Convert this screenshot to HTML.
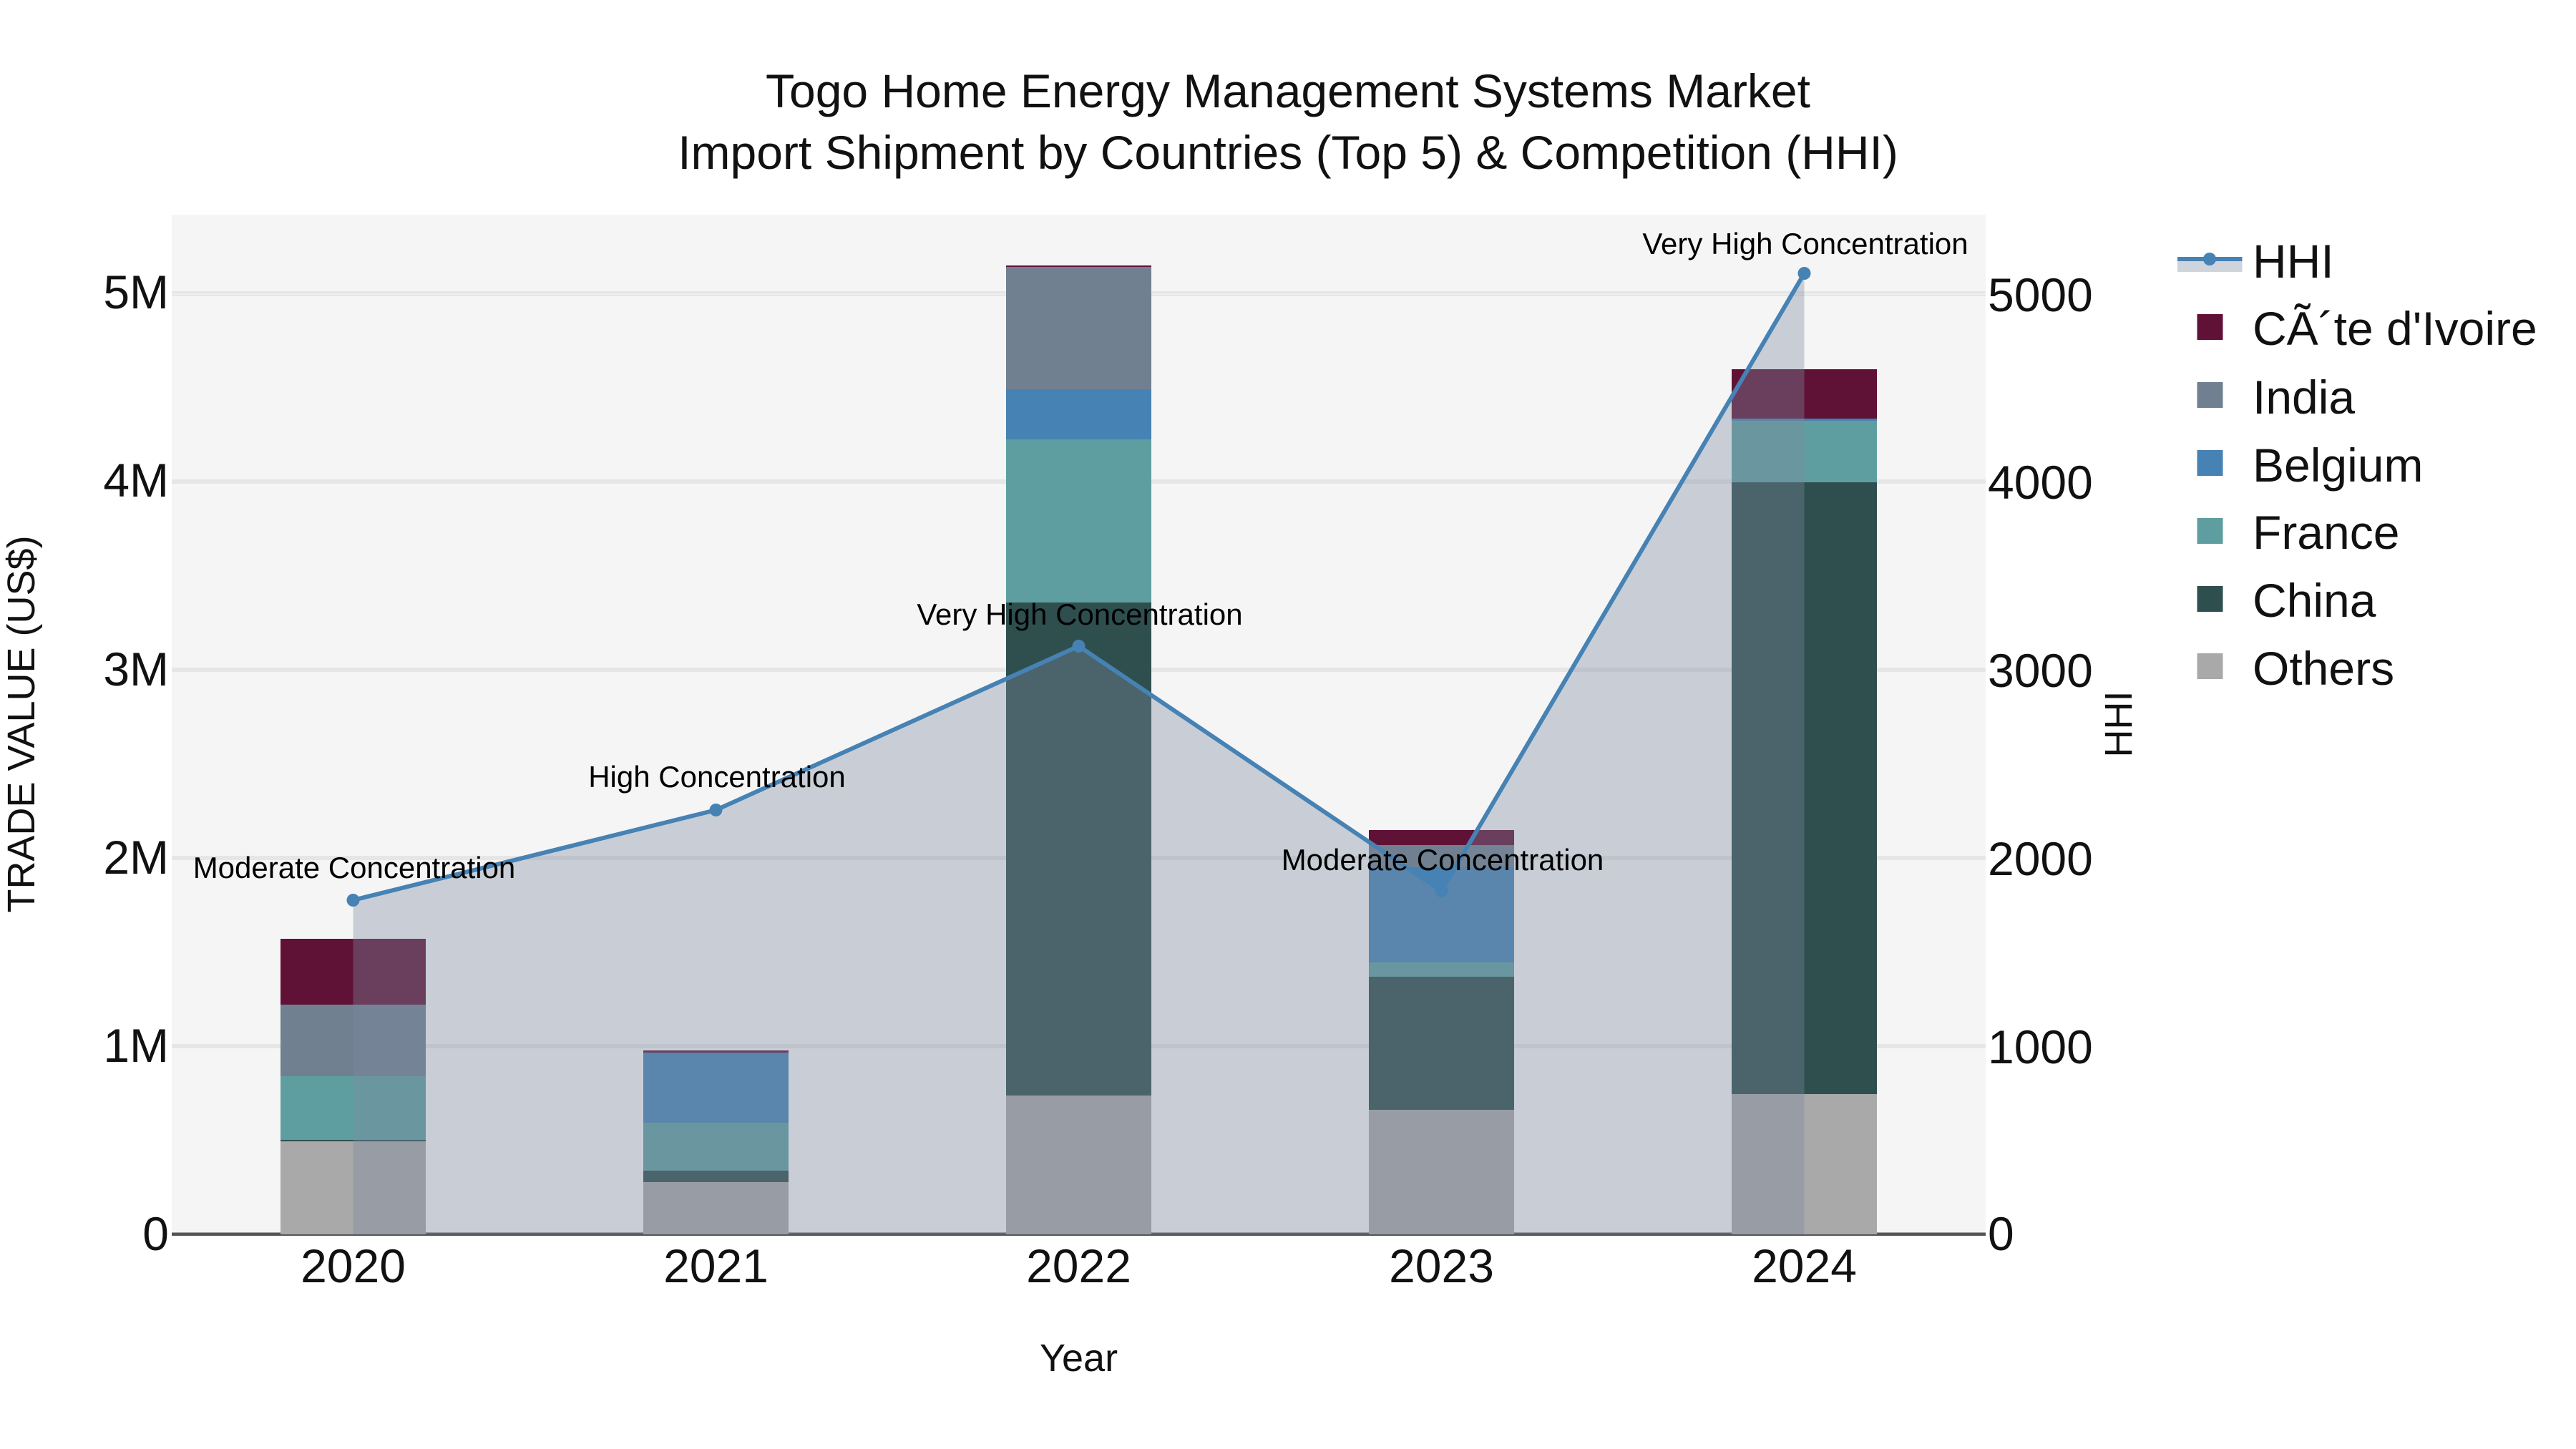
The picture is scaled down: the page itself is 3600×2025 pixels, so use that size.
<!DOCTYPE html>
<html>
<head>
<meta charset="utf-8">
<title>Togo Home Energy Management Systems Market</title>
<style>
html,body{margin:0;padding:0;background:#fff;width:3600px;height:2025px;overflow:hidden}
svg{display:block}
text{font-family:"Liberation Sans",Arial,sans-serif;fill:#111}
.t{font-size:66px}
.a{font-size:54px}
.n{font-size:42px;fill:#000;text-anchor:middle}
.m{text-anchor:middle}
.e{text-anchor:end}
</style>
</head>
<body>
<svg width="3600" height="2025" viewBox="0 0 3600 2025" xmlns="http://www.w3.org/2000/svg">
<rect width="3600" height="2025" fill="#fff"/>
<rect x="240" y="300" width="2535" height="1425" fill="#f5f5f5"/>

<!-- gridlines -->
<g fill="#e6e6e6">
<rect x="240" y="407" width="2535" height="3"/>
<rect x="240" y="410" width="2535" height="2" fill="#eeeeee"/>
<rect x="240" y="412" width="2535" height="2"/>
<rect x="240" y="670" width="2535" height="6"/>
<rect x="240" y="933" width="2535" height="6"/>
<rect x="240" y="1196" width="2535" height="6"/>
<rect x="240" y="1459" width="2535" height="6"/>
</g>
<rect x="240" y="1722.5" width="2535" height="4.5" fill="#555"/>

<!-- bars 2020 -->
<g>
<rect x="392" y="1595" width="203" height="130" fill="#a9a9a9"/>
<rect x="392" y="1593" width="203" height="2" fill="#2f4f4f"/>
<rect x="392" y="1504" width="203" height="89" fill="#5f9ea0"/>
<rect x="392" y="1404" width="203" height="100" fill="#708090"/>
<rect x="392" y="1312" width="203" height="92" fill="#601236"/>
</g>
<!-- bars 2021 -->
<g>
<rect x="899" y="1652" width="203" height="73" fill="#a9a9a9"/>
<rect x="899" y="1636" width="203" height="16" fill="#2f4f4f"/>
<rect x="899" y="1569" width="203" height="67" fill="#5f9ea0"/>
<rect x="899" y="1471" width="203" height="98" fill="#4682b4"/>
<rect x="899" y="1468" width="203" height="3" fill="#601236"/>
</g>
<!-- bars 2022 -->
<g>
<rect x="1406" y="1531" width="203" height="194" fill="#a9a9a9"/>
<rect x="1406" y="842" width="203" height="689" fill="#2f4f4f"/>
<rect x="1406" y="614" width="203" height="228" fill="#5f9ea0"/>
<rect x="1406" y="544" width="203" height="70" fill="#4682b4"/>
<rect x="1406" y="372" width="203" height="172" fill="#708090"/>
<rect x="1406" y="371" width="203" height="2" fill="#601236"/>
</g>
<!-- bars 2023 -->
<g>
<rect x="1913" y="1551" width="203" height="174" fill="#a9a9a9"/>
<rect x="1913" y="1365" width="203" height="186" fill="#2f4f4f"/>
<rect x="1913" y="1345" width="203" height="20" fill="#5f9ea0"/>
<rect x="1913" y="1212" width="203" height="133" fill="#4682b4"/>
<rect x="1913" y="1181" width="203" height="31" fill="#708090"/>
<rect x="1913" y="1160" width="203" height="21" fill="#601236"/>
</g>
<!-- bars 2024 -->
<g>
<rect x="2420" y="1529" width="203" height="196" fill="#a9a9a9"/>
<rect x="2420" y="674" width="203" height="855" fill="#2f4f4f"/>
<rect x="2420" y="588" width="203" height="86" fill="#5f9ea0"/>
<rect x="2420" y="585" width="203" height="3" fill="#4682b4"/>
<rect x="2420" y="516" width="203" height="69" fill="#601236"/>
</g>

<!-- HHI area and line -->
<polygon points="493.5,1258 1000.5,1132 1507.5,903 2014.5,1245 2521.5,382 2521.5,1725 493.5,1725" fill="rgb(124,137,159)" fill-opacity="0.37"/>
<polyline points="493.5,1258 1000.5,1132 1507.5,903 2014.5,1245 2521.5,382" fill="none" stroke="#4682b4" stroke-width="6" stroke-linejoin="round"/>
<g fill="#4682b4">
<circle cx="493.5" cy="1258" r="9"/>
<circle cx="1000.5" cy="1132" r="9"/>
<circle cx="1507.5" cy="903" r="9"/>
<circle cx="2014.5" cy="1245" r="9"/>
<circle cx="2521.5" cy="382" r="9"/>
</g>

<!-- annotations -->
<text class="n" x="495" y="1227">Moderate Concentration</text>
<text class="n" x="1002" y="1100">High Concentration</text>
<text class="n" x="1509" y="873">Very High Concentration</text>
<text class="n" x="2016" y="1216">Moderate Concentration</text>
<text class="n" x="2523" y="355">Very High Concentration</text>

<!-- title -->
<text class="t m" x="1800" y="150">Togo Home Energy Management Systems Market</text>
<text class="t m" x="1800" y="236">Import Shipment by Countries (Top 5) &amp; Competition (HHI)</text>

<!-- left ticks -->
<text class="t e" x="236" y="431">5M</text>
<text class="t e" x="236" y="694">4M</text>
<text class="t e" x="236" y="958">3M</text>
<text class="t e" x="236" y="1221">2M</text>
<text class="t e" x="236" y="1484">1M</text>
<text class="t e" x="236" y="1747">0</text>

<!-- right ticks -->
<text class="t" x="2778" y="435">5000</text>
<text class="t" x="2778" y="697">4000</text>
<text class="t" x="2778" y="960">3000</text>
<text class="t" x="2778" y="1223">2000</text>
<text class="t" x="2778" y="1486">1000</text>
<text class="t" x="2778" y="1747">0</text>

<!-- x ticks -->
<text class="t m" x="493.5" y="1792">2020</text>
<text class="t m" x="1000.5" y="1792">2021</text>
<text class="t m" x="1507.5" y="1792">2022</text>
<text class="t m" x="2014.5" y="1792">2023</text>
<text class="t m" x="2521.5" y="1792">2024</text>

<!-- axis titles -->
<text class="a m" x="1507.5" y="1916">Year</text>
<text class="a m" transform="translate(48 1012) rotate(-90)">TRADE VALUE (US$)</text>
<text class="a m" transform="translate(2979 1012) rotate(-90)">HHI</text>

<!-- legend -->
<rect x="3043" y="362" width="90.5" height="18" fill="rgb(124,137,159)" fill-opacity="0.37"/>
<rect x="3043" y="359" width="90.5" height="6" fill="#4682b4"/>
<circle cx="3088" cy="362" r="9" fill="#4682b4"/>
<rect x="3070.5" y="439" width="36" height="36" fill="#601236"/>
<rect x="3070.5" y="534" width="36" height="36" fill="#708090"/>
<rect x="3070.5" y="629" width="36" height="36" fill="#4682b4"/>
<rect x="3070.5" y="724" width="36" height="36" fill="#5f9ea0"/>
<rect x="3070.5" y="819" width="36" height="36" fill="#2f4f4f"/>
<rect x="3070.5" y="913" width="36" height="36" fill="#a9a9a9"/>
<text class="t" x="3148" y="388">HHI</text>
<text class="t" x="3148" y="482">C&Atilde;&acute;te d'Ivoire</text>
<text class="t" x="3148" y="578">India</text>
<text class="t" x="3148" y="673">Belgium</text>
<text class="t" x="3148" y="767">France</text>
<text class="t" x="3148" y="862">China</text>
<text class="t" x="3148" y="957">Others</text>
</svg>
</body>
</html>
